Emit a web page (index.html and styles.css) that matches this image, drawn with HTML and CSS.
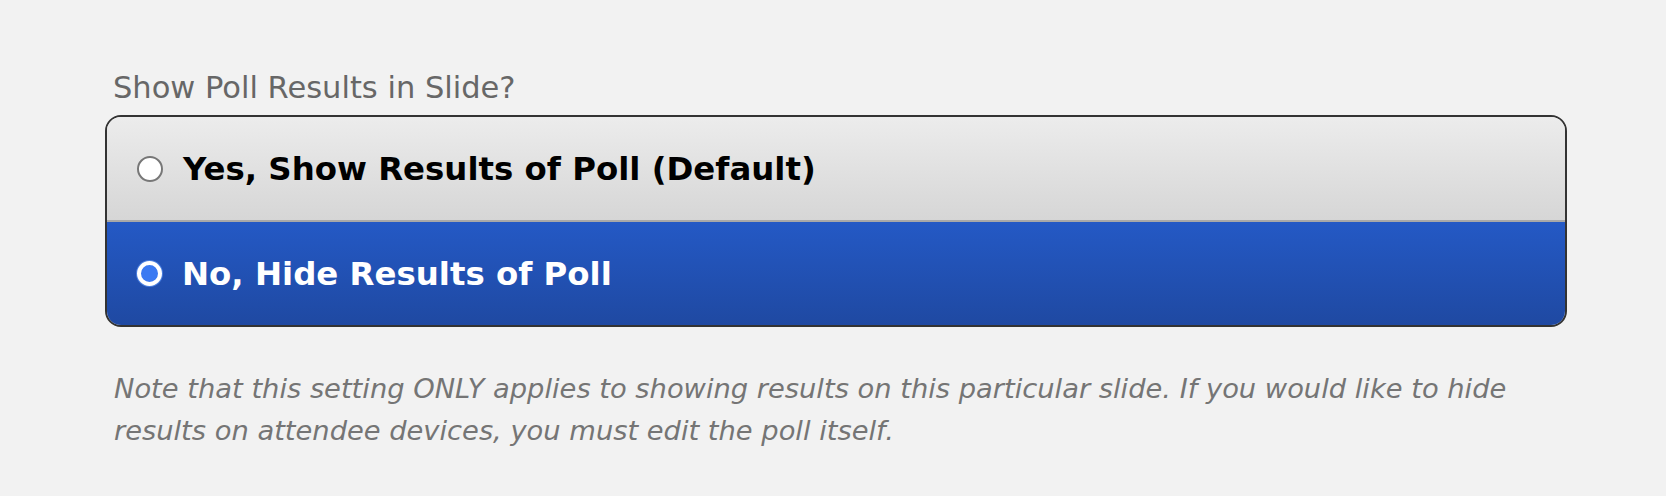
FILE: index.html
```html
<!DOCTYPE html>
<html lang="en">
<head>
<meta charset="utf-8">
<title>Show Poll Results in Slide?</title>
<link rel="stylesheet" href="styles.css">
</head>
<body>
<div class="panel">
  <div class="field-label">Show Poll Results in Slide?</div>
  <div class="choice-group">
    <label class="choice choice-off">
      <span class="radio radio-off"></span>
      <span class="choice-text">Yes, Show Results of Poll (Default)</span>
    </label>
    <label class="choice choice-on">
      <span class="radio radio-on"></span>
      <span class="choice-text">No, Hide Results of Poll</span>
    </label>
  </div>
  <p class="note">Note that this setting ONLY applies to showing results on this particular slide. If you would like to hide results on attendee devices, you must edit the poll itself.</p>
</div>
</body>
</html>
```

FILE: styles.css
```css
html, body {
  margin: 0;
  padding: 0;
  background: #f2f2f2;
}

body {
  font-family: "DejaVu Sans", "Liberation Sans", sans-serif;
}

.panel {
  padding: 70px 0 0 105px;
  width: 1462px;
}

.field-label {
  font-size: 30.5px;
  line-height: 36px;
  color: #676767;
  padding-left: 8px;
  margin-bottom: 9px;
}

.choice-group {
  border: 2px solid #333333;
  border-radius: 16px;
  overflow: hidden;
  display: flex;
  flex-direction: column;
}

.choice {
  display: flex;
  align-items: center;
  gap: 20px;
  padding-left: 30px;
  box-sizing: border-box;
}

.choice-off {
  height: 105px;
  border-bottom: 2px solid #a8a8a8;
  background: linear-gradient(to bottom, #ececec, #d6d6d6);
  color: #000000;
}

.choice-on {
  height: 103px;
  background: linear-gradient(to bottom, #2459c5, #1f49a2);
  color: #ffffff;
}

.choice-text {
  font-size: 32.4px;
  font-weight: bold;
  line-height: 40px;
}

.radio {
  width: 26px;
  height: 26px;
  border-radius: 50%;
  box-sizing: border-box;
  flex: none;
}

.radio-off {
  background: #ffffff;
  border: 2px solid #777777;
}

.radio-on {
  background: #3a79f2;
  border: 4px solid #ffffff;
  box-shadow: 0 0 0 1px #4a7fe0;
  width: 25px;
  height: 25px;
}

.note {
  margin: 41px 0 0 0;
  padding: 0 30px 0 9px;
  font-size: 27.3px;
  line-height: 42px;
  font-style: italic;
  color: #757575;
}
```
